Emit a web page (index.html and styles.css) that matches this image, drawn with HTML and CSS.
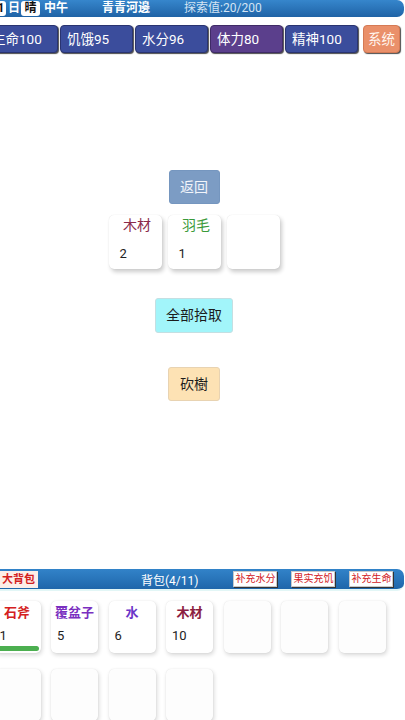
FILE: index.html
```html
<!DOCTYPE html>
<html lang="zh">
<head>
<meta charset="utf-8">
<title>青青河邊</title>
<link rel="stylesheet" href="styles.css">
</head>
<body>
<div class="app">
  <div class="topbar">
    <span class="tag day">1</span>
    <span class="t-ri">日</span>
    <span class="tag weather">晴</span>
    <span class="t-time">中午</span>
    <span class="t-place">青青河邊</span>
    <span class="t-explore">探索值:20/200</span>
  </div>

  <div class="stats">
    <div class="stat">生命100</div>
    <div class="stat">饥饿95</div>
    <div class="stat">水分96</div>
    <div class="stat stat-purple">体力80</div>
    <div class="stat">精神100</div>
    <div class="stat stat-sys">系统</div>
  </div>

  <div class="main">
    <div class="btn btn-back">返回</div>
    <div class="loot">
      <div class="item">
        <div class="item-name c-wood">木材</div>
        <div class="item-count">2</div>
      </div>
      <div class="item">
        <div class="item-name c-feather">羽毛</div>
        <div class="item-count">1</div>
      </div>
      <div class="item"></div>
    </div>
    <div class="btn btn-pick">全部拾取</div>
    <div class="btn btn-chop">砍樹</div>
  </div>

  <div class="bagbar">
    <span class="bigbag">大背包</span>
    <span class="bag-title">背包(4/11)</span>
    <span class="mini mini-first">补充水分</span>
    <span class="mini">果实充饥</span>
    <span class="mini">补充生命</span>
  </div>

  <div class="bag">
    <div class="cell">
      <div class="cell-name c-red">石斧</div>
      <div class="cell-count">1</div>
      <div class="bar"></div>
    </div>
    <div class="cell">
      <div class="cell-name c-purple">覆盆子</div>
      <div class="cell-count">5</div>
    </div>
    <div class="cell">
      <div class="cell-name c-violet">水</div>
      <div class="cell-count">6</div>
    </div>
    <div class="cell">
      <div class="cell-name c-maroon">木材</div>
      <div class="cell-count">10</div>
    </div>
    <div class="cell empty"></div>
    <div class="cell empty"></div>
    <div class="cell empty"></div>
    <div class="cell empty"></div>
    <div class="cell empty"></div>
    <div class="cell empty"></div>
    <div class="cell empty"></div>
  </div>
</div>
</body>
</html>
```

FILE: styles.css
```css
html, body {
  margin: 0;
  padding: 0;
  background: #ffffff;
  overflow: hidden;
}

body {
  width: 405px;
  height: 720px;
  font-family: Roboto, "Noto Sans CJK SC", "Noto Sans", sans-serif;
  color: #222;
}

.app {
  width: 420px;
  height: 720px;
  margin-left: -16px;
  display: flex;
  flex-direction: column;
}

/* top bar */
.topbar {
  flex: none;
  height: 17px;
  display: flex;
  align-items: center;
  background: linear-gradient(#3686cc, #1f63a6);
  border-radius: 0 7px 7px 0;
  color: #fff;
  font-size: 12px;
  font-weight: bold;
  line-height: 17px;
  white-space: nowrap;
}

.tag {
  background: #fff;
  color: #111;
  border-radius: 3px;
  height: 15px;
  line-height: 15px;
  text-align: center;
}

.day {
  margin-left: 12px;
  width: 10px;
}

.t-ri {
  margin-left: 2px;
}

.weather {
  margin-left: 1px;
  width: 19px;
}

.t-time {
  margin-left: 4px;
}

.t-place {
  margin-left: 34px;
}

.t-explore {
  margin-left: 34px;
  font-weight: normal;
  color: #d4e4f4;
}

/* stats row */
.stats {
  flex: none;
  display: flex;
  margin-top: 8px;
  padding-left: 1px;
  gap: 2px;
}

.stat {
  box-sizing: border-box;
  width: 73px;
  height: 28px;
  background: #3b4d9c;
  border: 1px solid #2a3470;
  border-radius: 4px;
  box-shadow: 1px 1px 1px rgba(0, 0, 0, 0.7);
  color: #fff;
  font-size: 13.5px;
  line-height: 26px;
  padding-left: 6px;
  white-space: nowrap;
}

.stat-purple {
  background: #5b3f8c;
  border-color: #3f2b66;
}

.stat-sys {
  width: 37px;
  margin-left: 3px;
  padding-left: 0;
  text-align: center;
  background: #ea906a;
  border-color: #d57a55;
  color: #fff5ee;
}

/* main area */
.main {
  flex: 1;
  min-height: 0;
  display: flex;
  flex-direction: column;
  align-items: center;
}

.btn {
  box-sizing: border-box;
  height: 34px;
  line-height: 32px;
  font-size: 14px;
  text-align: center;
  border-radius: 3px;
  border: 1px solid transparent;
}

.btn-back {
  margin-top: 117px;
  width: 51px;
  background: #7c9cc4;
  border-color: #7596bf;
  color: #f2f5fb;
}

.loot {
  margin-top: 11px;
  display: flex;
  gap: 6px;
}

.item {
  box-sizing: border-box;
  width: 53px;
  height: 54px;
  background: #fff;
  border-radius: 5px;
  box-shadow: 2px 3px 4px rgba(0, 0, 0, 0.2), 0 0 1px rgba(0, 0, 0, 0.15);
  padding-top: 1px;
}

.item-name {
  font-size: 14px;
  line-height: 18px;
  text-align: center;
  padding-left: 4px;
}

.item-count {
  font-size: 13px;
  line-height: 18px;
  padding-left: 11px;
  margin-top: 11px;
  color: #222;
}

.c-wood {
  color: #8b2b4b;
}

.c-feather {
  color: #3a9a3a;
}

.btn-pick {
  margin-top: 29px;
  width: 78px;
  height: 35px;
  line-height: 33px;
  background: #a2f5fa;
  border-color: #c4dfe2;
  color: #1c1c1c;
}

.btn-chop {
  margin-top: 34px;
  width: 52px;
  background: #fde2b4;
  border-color: #e8d3b2;
  color: #1c1c1c;
}

/* bag header */
.bagbar {
  flex: none;
  height: 20px;
  display: flex;
  align-items: center;
  background: linear-gradient(#3283c9, #1f66aa);
  border-radius: 0 7px 7px 0;
  border-bottom: 2px solid #e2f6f6;
  white-space: nowrap;
}

.bigbag {
  margin-left: 15px;
  height: 17px;
  line-height: 17px;
  padding: 0 3px;
  background: #fdeee8;
  color: #d2201e;
  font-size: 11px;
  font-weight: bold;
}

.bag-title {
  margin-left: 103px;
  color: #fff;
  font-size: 12px;
}

.mini {
  box-sizing: border-box;
  width: 44px;
  height: 16px;
  line-height: 14px;
  margin-left: 14px;
  background: #fff;
  border: 1px solid #c9c9c9;
  box-shadow: 1px 1px 0 #333;
  color: #d2201e;
  font-size: 10px;
  text-align: center;
}

.mini-first {
  margin-left: 35px;
}

/* bag grid */
.bag {
  flex: none;
  box-sizing: border-box;
  height: 129px;
  overflow: hidden;
  display: grid;
  grid-template-columns: repeat(7, 47px);
  grid-auto-rows: 52px;
  align-content: start;
  column-gap: 10.5px;
  row-gap: 16px;
  padding: 10px 0 0 9.5px;
}

.cell {
  box-sizing: border-box;
  height: 52px;
  background: #fff;
  border-radius: 5px;
  box-shadow: 1px 2px 4px rgba(0, 0, 0, 0.16), 0 0 1px rgba(0, 0, 0, 0.12);
  padding-top: 3px;
}

.cell.empty {
  background: #fdfdfd;
}

.cell-name {
  font-size: 13px;
  font-weight: bold;
  line-height: 18px;
  text-align: center;
}

.cell-count {
  font-size: 13px;
  line-height: 18px;
  margin-top: 5px;
  padding-left: 6px;
  color: #222;
}

.bar {
  margin: 1px 2px 0;
  height: 5px;
  border-radius: 3px;
  background: #4caf50;
}

.c-red {
  color: #d42020;
}

.c-purple {
  color: #7a2fc0;
}

.c-violet {
  color: #6a35c8;
}

.c-maroon {
  color: #8b2040;
}
```
